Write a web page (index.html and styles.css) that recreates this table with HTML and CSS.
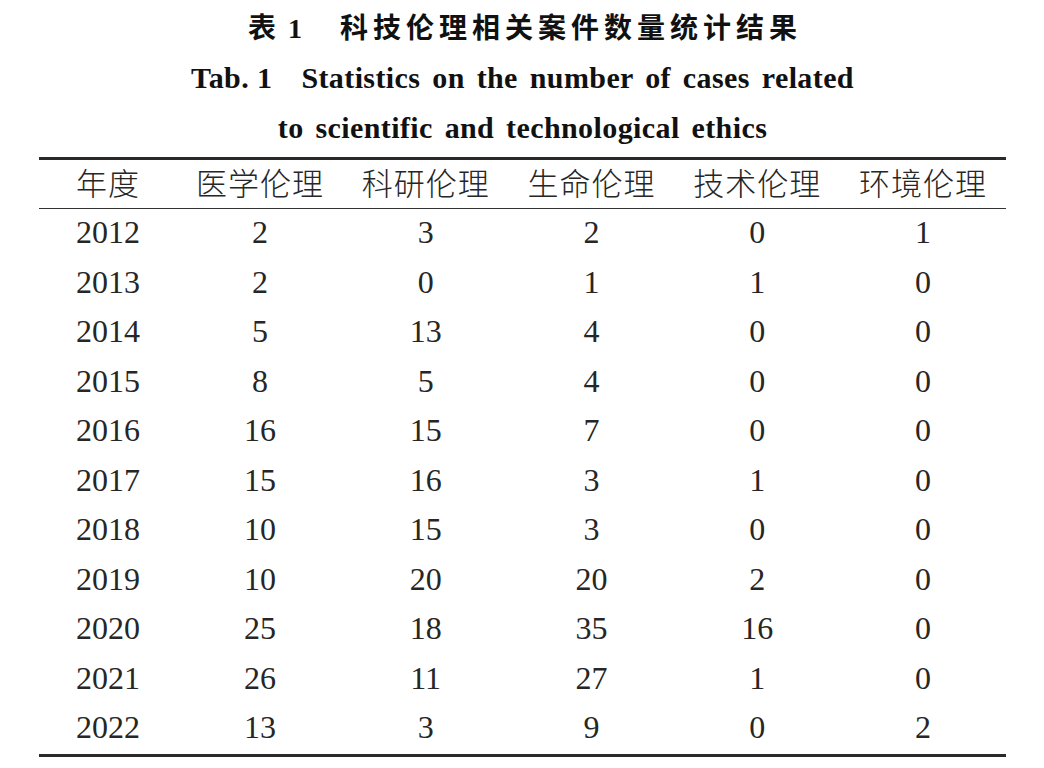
FILE: index.html
```html
<!DOCTYPE html>
<html lang="zh-CN">
<head>
<meta charset="utf-8">
<title>表1 科技伦理相关案件数量统计结果</title>
<link rel="stylesheet" href="styles.css">
</head>
<body>
<div class="page">
  <div class="caption">
    <div class="cap-cn"><span class="cap-no">表<span class="cap-num">1</span></span><span class="cap-text">科技伦理相关案件数量统计结果</span></div>
    <div class="cap-en"><span class="en-inner"><span class="en-no">Tab. 1</span>Statistics on the number of cases related</span></div>
    <div class="cap-en"><span class="en-inner">to scientific and technological ethics</span></div>
  </div>
  <div class="table">
    <div class="row head">
      <div class="cell">年度</div><div class="cell">医学伦理</div><div class="cell">科研伦理</div><div class="cell">生命伦理</div><div class="cell">技术伦理</div><div class="cell">环境伦理</div>
    </div>
    <div class="row"><div class="cell">2012</div><div class="cell">2</div><div class="cell">3</div><div class="cell">2</div><div class="cell">0</div><div class="cell">1</div></div>
    <div class="row"><div class="cell">2013</div><div class="cell">2</div><div class="cell">0</div><div class="cell">1</div><div class="cell">1</div><div class="cell">0</div></div>
    <div class="row"><div class="cell">2014</div><div class="cell">5</div><div class="cell">13</div><div class="cell">4</div><div class="cell">0</div><div class="cell">0</div></div>
    <div class="row"><div class="cell">2015</div><div class="cell">8</div><div class="cell">5</div><div class="cell">4</div><div class="cell">0</div><div class="cell">0</div></div>
    <div class="row"><div class="cell">2016</div><div class="cell">16</div><div class="cell">15</div><div class="cell">7</div><div class="cell">0</div><div class="cell">0</div></div>
    <div class="row"><div class="cell">2017</div><div class="cell">15</div><div class="cell">16</div><div class="cell">3</div><div class="cell">1</div><div class="cell">0</div></div>
    <div class="row"><div class="cell">2018</div><div class="cell">10</div><div class="cell">15</div><div class="cell">3</div><div class="cell">0</div><div class="cell">0</div></div>
    <div class="row"><div class="cell">2019</div><div class="cell">10</div><div class="cell">20</div><div class="cell">20</div><div class="cell">2</div><div class="cell">0</div></div>
    <div class="row"><div class="cell">2020</div><div class="cell">25</div><div class="cell">18</div><div class="cell">35</div><div class="cell">16</div><div class="cell">0</div></div>
    <div class="row"><div class="cell">2021</div><div class="cell">26</div><div class="cell">11</div><div class="cell">27</div><div class="cell">1</div><div class="cell">0</div></div>
    <div class="row"><div class="cell">2022</div><div class="cell">13</div><div class="cell">3</div><div class="cell">9</div><div class="cell">0</div><div class="cell">2</div></div>
  </div>
</div>
</body>
</html>
```

FILE: styles.css
```css
html, body {
  margin: 0;
  padding: 0;
  background: #ffffff;
}
.page {
  width: 1044px;
  height: 768px;
  overflow: hidden;
  padding: 3px 38px 0 39px;
  box-sizing: border-box;
  color: #1a1a1a;
}
.caption {
  text-align: center;
}
.cap-cn {
  height: 50px;
  line-height: 46px;
  padding-bottom: 4px;
  box-sizing: border-box;
  font-family: "Noto Sans CJK SC", sans-serif;
  font-weight: 700;
  font-size: 28px;
  color: #111;
}
.cap-no {
  margin-right: 38px;
}
.cap-num {
  margin-left: 12px;
  font-family: "Liberation Serif", serif;
}
.cap-text {
  letter-spacing: 5px;
  margin-right: -5px;
}
.cap-en {
  height: 49.5px;
  line-height: 49.5px;
  font-family: "Liberation Serif", "Times New Roman", serif;
  font-weight: 700;
  font-size: 30px;
  color: #111;
}
.en-inner {
  display: inline-block;
  word-spacing: 4px;
  letter-spacing: 0.4px;
}
.en-no {
  margin-right: 29px;
  word-spacing: 0;
}
.table {
  margin-top: 5px;
  border-top: 3px solid #2a2a2a;
  border-bottom: 3px solid #2a2a2a;
}
.row {
  display: grid;
  grid-template-columns: 138px repeat(5, 1fr);
  height: 49.5px;
  align-items: center;
  font-family: "Liberation Serif", "Times New Roman", serif;
  font-size: 32px;
  color: #262626;
}
.row.head {
  height: 48px;
  border-bottom: 1.5px solid #333;
  font-family: "Noto Sans CJK SC", sans-serif;
  font-weight: 300;
  font-size: 31px;
}
.row.head .cell {
  letter-spacing: 1px;
  padding-bottom: 5px;
}
.cell {
  text-align: center;
  line-height: 1;
  padding-bottom: 3px;
}
```
